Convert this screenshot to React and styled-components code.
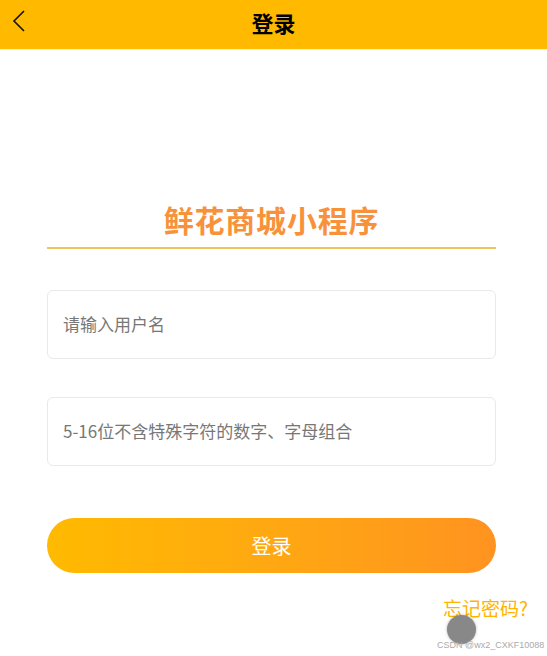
import React from "react";
import styled, { createGlobalStyle } from "styled-components";

const GlobalStyle = createGlobalStyle`
    html, body {
        margin: 0;
        padding: 0;
        background: #fff;
        font-family: "Noto Sans CJK SC", "Liberation Sans", sans-serif;
    }
`;

const Page = styled.div`
    width: 547px;
    height: 656px;
    position: relative;
    overflow: hidden;
    background: #fff;
`;

const Header = styled.div`
    height: 49px;
    background: #ffba00;
    display: flex;
    align-items: center;
    justify-content: center;
    position: relative;
    border-bottom: 1px solid #fff3c8;
`;

const Back = styled.div`
    position: absolute;
    left: 10px;
    top: 9px;
    width: 20px;
    height: 24px;
`;

const HeaderTitle = styled.div`
    font-size: 22px;
    font-weight: 700;
    color: #000;
    margin-top: -6px;
`;

const Main = styled.div`
    padding: 0 51px 0 47px;
    display: flex;
    flex-direction: column;
`;

const Brand = styled.div`
    margin-top: 140px;
    height: 57px;
    display: flex;
    align-items: center;
    justify-content: center;
    font-size: 30px;
    font-weight: 700;
    color: #f8923a;
    letter-spacing: 0.8px;
    border-bottom: 2px solid #ecc55a;
`;

const Field = styled.div`
    margin-top: ${p => p.gap}px;
    height: 67px;
    border: 1px solid #e9e9e9;
    border-radius: 6px;
    display: flex;
    align-items: center;
    padding: 0 15px;
`;

const Placeholder = styled.span`
    font-size: 17px;
    color: #777;
    margin-top: -2px;
`;

const Button = styled.div`
    margin-top: 52px;
    height: 55px;
    border-radius: 28px;
    background: linear-gradient(90deg, #ffba00 0%, #ffa812 50%, #ff9320 100%);
    display: flex;
    align-items: center;
    justify-content: center;
    color: #fff;
    font-size: 20px;
`;

const Forgot = styled.div`
    position: absolute;
    left: 443px;
    top: 594px;
    font-size: 19px;
    color: #ffb400;
`;

const Dot = styled.div`
    position: absolute;
    left: 447px;
    top: 615px;
    width: 29px;
    height: 29px;
    border-radius: 50%;
    background: #888;
    box-shadow: 0 0 3px rgba(0, 0, 0, 0.3);
`;

const Watermark = styled.div`
    position: absolute;
    left: 437px;
    top: 640px;
    white-space: nowrap;
    font-family: "Liberation Sans", sans-serif;
    font-size: 9px;
    color: #aaa;
`;

const App = () => (
    <Page>
        <GlobalStyle />
        <Header>
            <Back>
                <svg width="20" height="24" viewBox="0 0 20 24">
                    <path d="M14 2 L4 12 L14 22" fill="none" stroke="#111" strokeWidth="1.6" />
                </svg>
            </Back>
            <HeaderTitle>登录</HeaderTitle>
        </Header>
        <Main>
            <Brand>鲜花商城小程序</Brand>
            <Field gap={41}>
                <Placeholder>请输入用户名</Placeholder>
            </Field>
            <Field gap={38}>
                <Placeholder>5-16位不含特殊字符的数字、字母组合</Placeholder>
            </Field>
            <Button>登录</Button>
        </Main>
        <Forgot>忘记密码?</Forgot>
        <Dot />
        <Watermark>CSDN @wx2_CXKF10088</Watermark>
    </Page>
);

export default App;
